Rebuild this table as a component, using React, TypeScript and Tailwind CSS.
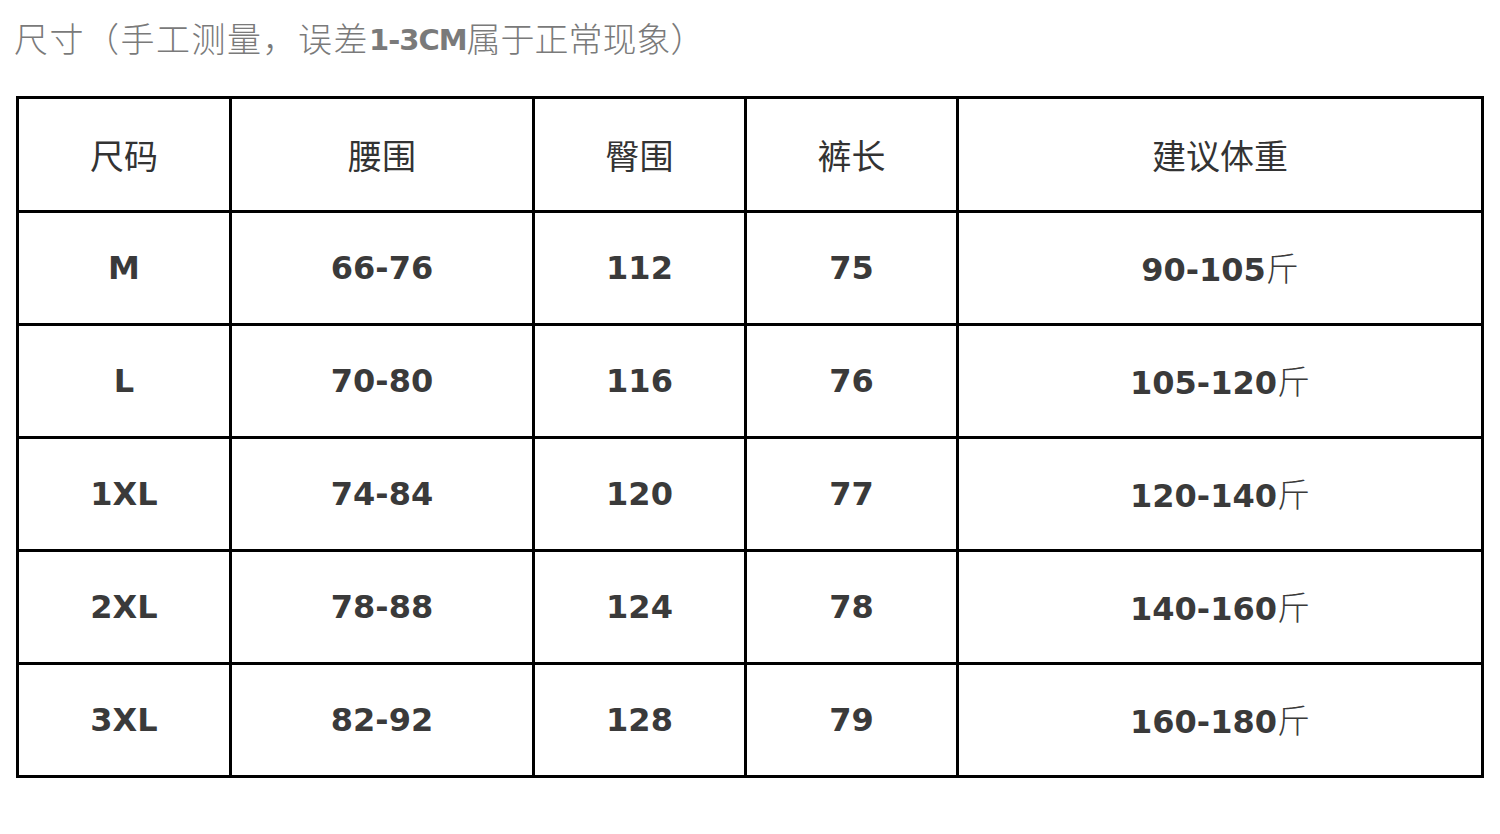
const headers = ['尺码', '腰围', '臀围', '裤长', '建议体重']

const rows = [
  ['M', '66-76', '112', '75', '90-105'],
  ['L', '70-80', '116', '76', '105-120'],
  ['1XL', '74-84', '120', '77', '120-140'],
  ['2XL', '78-88', '124', '78', '140-160'],
  ['3XL', '82-92', '128', '79', '160-180'],
]

const widths = ['w-[213px]', 'w-[303px]', 'w-[212px]', 'w-[212px]', 'w-[525px]']

const cjk = "font-['Noto_Sans_CJK_SC',sans-serif]"
const num = "font-['DejaVu_Sans','Noto_Sans_CJK_SC',sans-serif]"

export default function App() {
  return (
    <div className="w-[1500px] h-[834px] bg-white overflow-hidden">
      {/* Title */}
      <div className="pt-[17px] pl-[14px] h-[96px] text-[34px] leading-[42px] text-[#7a7a7a] flex items-start">
        <span className={`${cjk} font-light tracking-[1.5px]`}>尺寸（手工测量，误差</span>
        <span className={`${num} font-bold tracking-[-1px] text-[29px] pt-[2px]`}>1-3CM</span>
        <span className={`${cjk} font-light`}>属于正常现象）</span>
      </div>

      {/* Size table */}
      <table className="ml-[16px] w-[1465px] table-fixed border-collapse border-[3px] border-black">
        <thead>
          <tr className="h-[114px]">
            {headers.map((h, i) => (
              <th
                key={h}
                className={`${widths[i]} border-[3px] border-black text-center text-[34px] font-normal text-[#333] ${cjk}`}
              >
                {h}
              </th>
            ))}
          </tr>
        </thead>
        <tbody>
          {rows.map((r) => (
            <tr key={r[0]} className="h-[113px]">
              {r.map((c, i) => (
                <td
                  key={i}
                  className={`border-[3px] border-black text-center text-[32px] font-bold text-[#3a3a3a] ${num}`}
                >
                  {c}
                  {i === 4 && <span className={`${cjk} font-light text-[33px]`}>斤</span>}
                </td>
              ))}
            </tr>
          ))}
        </tbody>
      </table>
    </div>
  )
}
